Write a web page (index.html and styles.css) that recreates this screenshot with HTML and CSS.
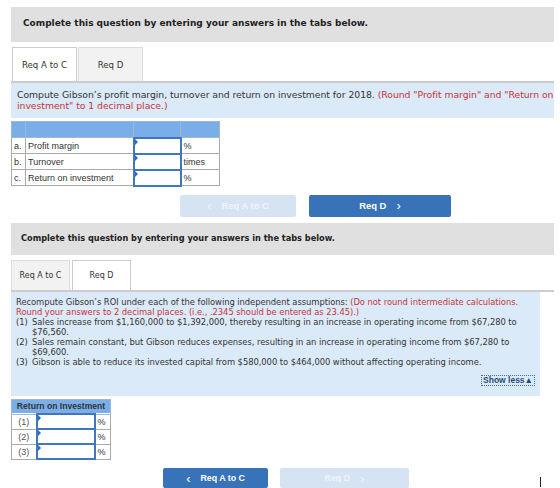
FILE: index.html
```html
<!DOCTYPE html>
<html>
<head>
<meta charset="utf-8">
<link rel="stylesheet" href="styles.css">
</head>
<body>
<section class="q q1">
  <div class="q-head">Complete this question by entering your answers in the tabs below.</div>
  <div class="tabs">
    <div class="tab active">Req A to C</div>
    <div class="tab">Req D</div>
  </div>
  <div class="prompt">
    Compute Gibson’s profit margin, turnover and return on investment for 2018. <span class="red">(Round "Profit margin" and "Return on<br>investment" to 1 decimal place.)</span>
  </div>
  <table class="grid g1">
    <colgroup><col class="c-l"><col class="c-n"><col class="c-i"><col class="c-u"></colgroup>
    <tr class="hd"><td></td><td></td><td></td><td></td></tr>
    <tr><td>a.</td><td>Profit margin</td><td class="inp"><span class="mark"></span></td><td>%</td></tr>
    <tr><td>b.</td><td>Turnover</td><td class="inp"><span class="mark"></span></td><td>times</td></tr>
    <tr><td>c.</td><td>Return on investment</td><td class="inp"><span class="mark"></span></td><td>%</td></tr>
  </table>
  <div class="nav nav1">
    <div class="btn off"><span class="chev">&lsaquo;</span>Req A to C</div>
    <div class="btn on">Req D<span class="chev r">&rsaquo;</span></div>
  </div>
</section>

<section class="q q2">
  <div class="q-head">Complete this question by entering your answers in the tabs below.</div>
  <div class="tabs">
    <div class="tab">Req A to C</div>
    <div class="tab active">Req D</div>
  </div>
  <div class="prompt">
    <p>Recompute Gibson’s ROI under each of the following independent assumptions: <span class="red">(Do not round intermediate calculations. Round your answers to 2 decimal places. (i.e., .2345 should be entered as 23.45).)</span></p>
    <ol>
      <li><span class="n">(1)</span><span>Sales increase from $1,160,000 to $1,392,000, thereby resulting in an increase in operating income from $67,280 to $76,560.</span></li>
      <li><span class="n">(2)</span><span>Sales remain constant, but Gibson reduces expenses, resulting in an increase in operating income from $67,280 to $69,600.</span></li>
      <li><span class="n">(3)</span><span>Gibson is able to reduce its invested capital from $580,000 to $464,000 without affecting operating income.</span></li>
    </ol>
    <div class="more"><span class="less">Show less&#9650;</span></div>
  </div>
  <table class="grid g2">
    <colgroup><col class="c-l"><col class="c-i"><col class="c-u"></colgroup>
    <tr class="hd"><td colspan="3">Return on Investment</td></tr>
    <tr><td class="ctr">(1)</td><td class="inp"><span class="mark"></span></td><td>%</td></tr>
    <tr><td class="ctr">(2)</td><td class="inp"><span class="mark"></span></td><td>%</td></tr>
    <tr><td class="ctr">(3)</td><td class="inp"><span class="mark"></span></td><td>%</td></tr>
  </table>
  <div class="nav nav2">
    <div class="btn on"><span class="chev">&lsaquo;</span>Req A to C</div>
    <div class="btn off">Req D<span class="chev r">&rsaquo;</span></div>
    <span class="caret"></span>
  </div>
</section>
</body>
</html>
```
FILE: styles.css
```css
* { box-sizing: border-box; }
html, body { margin: 0; padding: 0; background: #fff; }
body { width: 560px; height: 488px; overflow: hidden; font-family: "DejaVu Sans", Verdana, sans-serif; color: #333; }

.q { margin-left: 11px; }
.q1 { padding-top: 7px; width: 543px; }
.q2 { width: 543px; }

.q-head {
  background: #e0e0e0;
  font-weight: bold;
  color: #222;
}
.q1 .q-head { height: 35px; padding: 11px 12px 0; font-size: 9px; }
.q2 .q-head { height: 32px; margin-top: 6px; padding: 10px 10px 0; font-size: 8.2px; }

.tabs { display: flex; border-bottom: 2px solid #ccc; }
.tab {
  display: flex; align-items: center; justify-content: center;
  background: #f2f2f2; border: 1px solid #ddd; border-bottom: none;
  color: #333;
}
.tab.active { background: #fff; border-color: #ccc; }
.q1 .tabs { margin-top: 5px; padding-left: 1px; }
.q1 .tab { width: 65px; height: 34px; font-size: 8.6px; }
.q1 .tab + .tab { margin-left: 1px; }
.q2 .tabs { margin-top: 5px; }
.q2 .tab { width: 59px; height: 30px; font-size: 8px; }
.q2 .tab + .tab { margin-left: 2px; }

.prompt { background: #dbeaf8; color: #333; }
.red { color: #c9333a; }
.q1 .prompt { height: 35px; padding: 6px 0 0 6px; font-size: 9.3px; letter-spacing: -0.05px; line-height: 11px; white-space: nowrap; }
.q2 .prompt { width: 529px; height: 104px; padding: 5px 5px 0; font-size: 8.4px; letter-spacing: -0.05px; line-height: 10px; }
.q2 .prompt p { margin: 0; }
.q2 ol { list-style: none; margin: 0; padding: 0; }
.q2 li { display: flex; }
.q2 li .n { width: 16px; flex: none; }
.more { display: flex; justify-content: flex-end; margin-top: 8px; }
.less {
  font-family: "Liberation Sans", Arial, sans-serif;
  font-weight: bold; font-size: 8.5px; letter-spacing: 0; color: #2a4a74;
  border: 1px dotted #3f6aa1; padding: 0 1px; line-height: 9px;
}

.grid { border-collapse: collapse; table-layout: fixed; font-family: "Liberation Sans", Arial, sans-serif; color: #333; }
.grid td { border: 1px solid #aaa; padding: 0 2px; font-size: 9px; white-space: nowrap; overflow: hidden; }
.grid .hd td { background: #79aee8; border-color: #9fb7d3; }
.grid td.inp { border: 2px solid #4076bd; position: relative; padding: 0; }
.mark {
  position: absolute; left: 0; top: 0;
  width: 0; height: 0;
  border-top: 3px solid transparent; border-bottom: 3px solid transparent;
  border-left: 3px solid #2e6bc4;
}

.g1 { margin-top: 3px; width: 208px; }
.g1 tr td { height: 16px; }
.g1 .c-l { width: 14px; }
.g1 .c-n { width: 108px; }
.g1 .c-i { width: 47px; }
.g1 .c-u { width: 39px; }

.g2 { margin-top: 3px; width: 99px; }
.g2 .hd td { height: 15px; text-align: center; font-weight: bold; font-size: 8.6px; color: #333; }
.g2 tr td { height: 15px; }
.g2 .c-l { width: 25px; }
.g2 .c-i { width: 58px; }
.g2 .c-u { width: 16px; }
.g2 td.ctr { text-align: center; color: #555; }

.nav { display: flex; position: relative; }
.btn {
  display: flex; align-items: center; justify-content: center;
  font-family: "Liberation Sans", Arial, sans-serif; font-weight: bold;
  color: #fff; border-radius: 2px;
}
.btn.on { background: #3873b9; }
.btn.off { background: #d6e3f2; color: #eef4fb; }
.chev { font-size: 13px; font-weight: normal; margin-right: 10px; line-height: 1; }
.chev.r { margin: 0 0 0 10px; }

.nav1 { margin-top: 8px; padding-left: 169px; }
.nav1 .btn { height: 22px; font-size: 9.4px; }
.nav1 .btn.off { width: 116px; }
.nav1 .btn.on { width: 142px; margin-left: 13px; }

.nav2 { margin-top: 8px; padding-left: 152px; }
.nav2 .btn { height: 20px; font-size: 8.8px; }
.nav2 .btn.on { width: 105px; }
.nav2 .btn.off { width: 129px; margin-left: 12px; }
.caret { position: absolute; left: 529px; top: 9px; width: 1px; height: 10px; background: #222; }
```
